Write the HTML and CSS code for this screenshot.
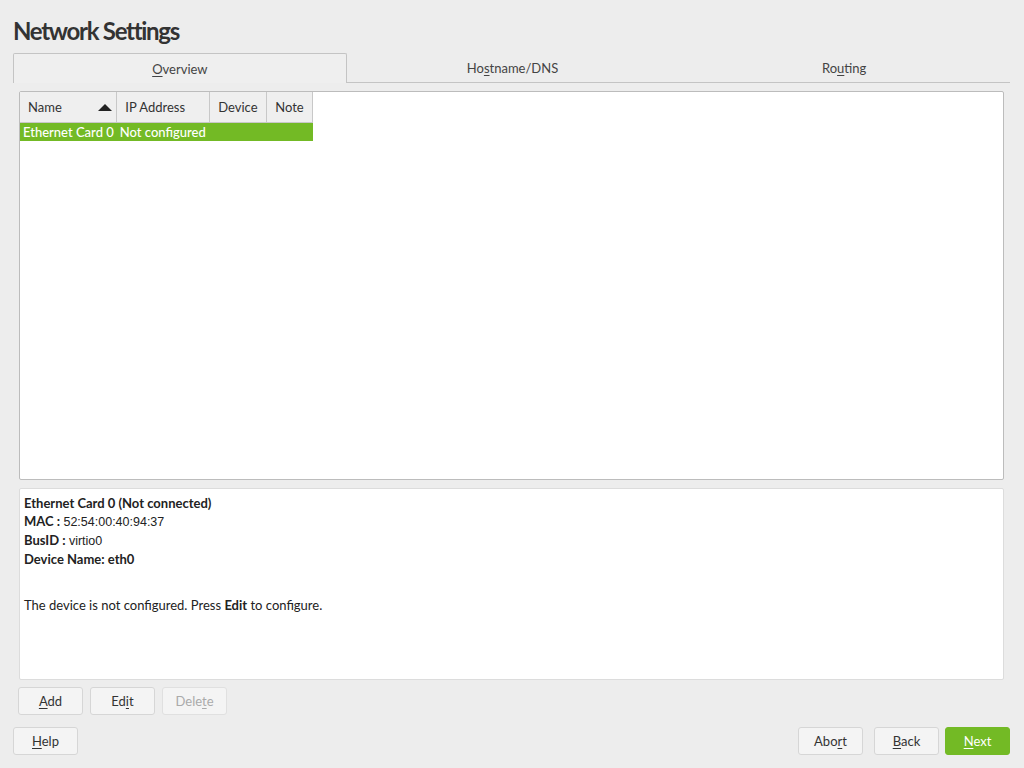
FILE: index.html
```html
<!DOCTYPE html>
<html>
<head>
<meta charset="utf-8">
<link rel="stylesheet" href="styles.css">
</head>
<body>
<div class="app">
  <h1 class="title">Network Settings</h1>
  <div class="tabs">
    <div class="tab active"><u>O</u>verview</div>
    <div class="tab">Ho<u>s</u>tname/DNS</div>
    <div class="tab">Ro<u>u</u>ting</div>
  </div>
  <div class="content">
    <div class="table-box">
      <table class="devices">
        <thead>
          <tr>
            <th class="c-name">Name <span class="sort"></span></th>
            <th class="c-ip">IP Address</th>
            <th class="c-dev">Device</th>
            <th class="c-note">Note</th>
          </tr>
        </thead>
        <tbody>
          <tr class="selected">
            <td>Ethernet Card 0</td>
            <td>Not configured</td>
            <td></td>
            <td></td>
          </tr>
        </tbody>
      </table>
    </div>
    <div class="info">
      <div class="line"><b>Ethernet Card 0 (Not connected)</b></div>
      <div class="line"><b>MAC :</b> <span class="val">52:54:00:40:94:37</span></div>
      <div class="line"><b>BusID :</b> <span class="val">virtio0</span></div>
      <div class="line"><b>Device Name: eth0</b></div>
      <div class="line gap">The device is not configured. Press <b>Edit</b> to configure.</div>
    </div>
    <div class="actions">
      <button class="btn"><u>A</u>dd</button>
      <button class="btn">Ed<u>i</u>t</button>
      <button class="btn disabled">Dele<u>t</u>e</button>
    </div>
  </div>
  <div class="footer">
    <button class="btn"><u>H</u>elp</button>
    <div class="spacer"></div>
    <button class="btn abort">Abo<u>r</u>t</button>
    <button class="btn"><u>B</u>ack</button>
    <button class="btn primary"><u>N</u>ext</button>
  </div>
</div>
</body>
</html>
```
FILE: styles.css
```css
html, body {
  margin: 0;
  padding: 0;
  background: #ededed;
}
body {
  font-family: "Lato", "Open Sans", "Liberation Sans", sans-serif;
  font-size: 13px;
  color: #2f2f2f;
}
.app {
  width: 1024px;
  height: 768px;
  box-sizing: border-box;
  padding: 15px 14px 0 13px;
  display: flex;
  flex-direction: column;
}
.title {
  margin: 0;
  height: 38px;
  font-size: 24px;
  font-weight: 700;
  line-height: 32px;
  color: #333;
  letter-spacing: -1.3px;
}
.tabs {
  display: flex;
  height: 29px;
  border-bottom: 1px solid #c4c4c4;
}
.tab {
  flex: 1;
  text-align: center;
  line-height: 30px;
  color: #444;
  font-size: 13px;
}
.tab u, .btn u {
  text-decoration-thickness: 1px;
  text-underline-offset: 2px;
}
.tab.active {
  background: #efefef;
  border: 1px solid #c4c4c4;
  border-bottom: none;
  border-radius: 2px 2px 0 0;
  margin-bottom: -1px;
  position: relative;
}
.content {
  padding: 8px 6px 0 6px;
  display: flex;
  flex-direction: column;
}
.table-box {
  height: 387px;
  background: #fff;
  border: 1px solid #bcbcbc;
  border-radius: 2px;
}
.devices {
  border-collapse: collapse;
  font-size: 13px;
}
.devices th {
  height: 30px;
  padding: 0 8px;
  background: #efefef;
  border-right: 1px solid #c8c8c8;
  border-bottom: 1px solid #c8c8c8;
  font-weight: 400;
  text-align: left;
  color: #333;
  box-sizing: border-box;
  white-space: nowrap;
}
.devices th.c-name { width: 96px; position: relative; }
.devices th.c-ip { width: 93px; }
.devices th.c-dev { width: 57px; }
.devices th.c-note { width: 46px; }
.sort {
  position: absolute;
  right: 4px;
  top: 12px;
  width: 0;
  height: 0;
  border-left: 7px solid transparent;
  border-right: 7px solid transparent;
  border-bottom: 7px solid #222;
}
.devices td {
  height: 18px;
  padding: 0 3px;
  white-space: nowrap;
}
.devices tr.selected td {
  background: #73ba25;
  color: #fff;
  font-weight: 500;
}
.info {
  margin-top: 8px;
  height: 180px;
  background: #fff;
  border: 1px solid #dcdcdc;
  border-radius: 2px;
  padding: 5px 4px;
  color: #222;
  line-height: 18px;
}
.info b { font-weight: 700; }
.info .val {
  font-family: "Liberation Sans", "Open Sans", sans-serif;
  font-size: 12.5px;
}
.info .gap { margin-top: 28px; }
.actions {
  display: flex;
  gap: 7px;
  margin-top: 7px;
  margin-left: -1px;
}
.btn {
  width: 65px;
  height: 28px;
  background: #f4f4f4;
  border: 1px solid #d6d6d6;
  border-radius: 3px;
  font-family: inherit;
  font-size: 13px;
  color: #333;
  padding: 0;
}
.btn.disabled { color: #aaa; border-color: #e0e0e0; }
.btn.primary {
  background: #73ba25;
  border-color: #73ba25;
  color: #fff;
}
.btn.abort { margin-right: 5px; }
.footer {
  display: flex;
  gap: 6px;
  margin-top: 12px;
}
.spacer { flex: 1; }
```
